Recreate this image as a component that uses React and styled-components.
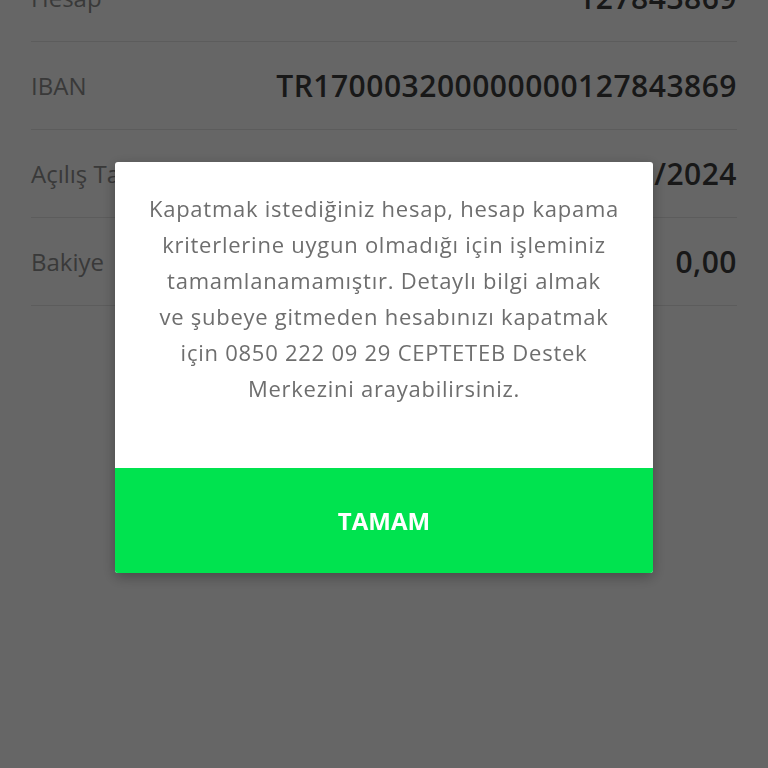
import React from "react";
import styled, { createGlobalStyle } from "styled-components";

const Global = createGlobalStyle`
  html, body { margin: 0; padding: 0; background: #ffffff; }
  body { font-family: "Open Sans", "Noto Sans", sans-serif; }
  * { box-sizing: border-box; }
`;

const Page = styled.div`
  width: 768px;
  height: 768px;
  overflow: hidden;
  background: #ffffff;
`;

const List = styled.div`
  margin-top: -46px;
  padding: 0 31px;
  display: flex;
  flex-direction: column;
`;

const Row = styled.div`
  height: 88px;
  display: flex;
  align-items: center;
  justify-content: space-between;
  border-bottom: 1px solid #e6e6e6;
`;

const Label = styled.span`
  font-size: 24px;
  color: #8f8f8f;
`;

const Value = styled.span`
  font-size: 30px;
  font-weight: 600;
  letter-spacing: 0.5px;
  color: #3e3e3e;
`;

const Overlay = styled.div`
  position: fixed;
  inset: 0;
  padding-bottom: 34px;
  background: rgba(0, 0, 0, 0.6);
  display: flex;
  align-items: center;
  justify-content: center;
`;

const Dialog = styled.div`
  width: 538px;
  background: #ffffff;
  border-radius: 3px;
  overflow: hidden;
  box-shadow: 0 4px 14px rgba(0, 0, 0, 0.3);
  display: flex;
  flex-direction: column;
`;

const Message = styled.p`
  margin: 0;
  padding: 28px 6px 62px;
  text-align: center;
  font-size: 22px;
  letter-spacing: 0.75px;
  line-height: 36px;
  color: #6e6e6e;
`;

const OkButton = styled.button`
  height: 105px;
  border: none;
  background: #00e34f;
  color: #ffffff;
  font-family: "Open Sans", sans-serif;
  font-weight: 700;
  font-size: 24px;
  cursor: pointer;
`;

const rows = [
  ["Hesap", "127843869"],
  ["IBAN", "TR170003200000000127843869"],
  ["Açılış Tarihi", "12/03/2024"],
  ["Bakiye", "0,00"],
];

export default function App() {
  return (
    <Page>
      <Global />
      <List>
        {rows.map(([l, v]) => (
          <Row key={l}>
            <Label>{l}</Label>
            <Value>{v}</Value>
          </Row>
        ))}
      </List>
      <Overlay>
        <Dialog>
          <Message>
            Kapatmak istediğiniz hesap, hesap kapama
            <br />
            kriterlerine uygun olmadığı için işleminiz
            <br />
            tamamlanamamıştır. Detaylı bilgi almak
            <br />
            ve şubeye gitmeden hesabınızı kapatmak
            <br />
            için 0850 222 09 29 CEPTETEB Destek
            <br />
            Merkezini arayabilirsiniz.
          </Message>
          <OkButton>TAMAM</OkButton>
        </Dialog>
      </Overlay>
    </Page>
  );
}
